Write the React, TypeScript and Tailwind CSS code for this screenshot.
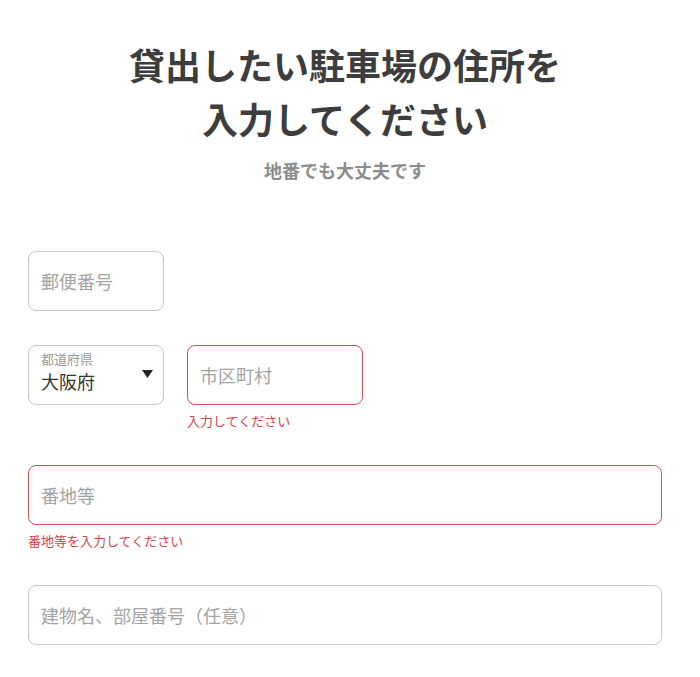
import React from 'react';

const font = 'font-["Noto_Sans_CJK_JP","Noto_Sans",sans-serif]';

const Field: React.FC<{ placeholder: string; error?: string; className?: string }> = ({
  placeholder,
  error,
  className = '',
}) => (
  <div className={className}>
    <div
      className={`h-[60px] rounded-lg border bg-white px-3 flex items-center ${
        error ? 'border-[#dc4d58]' : 'border-[#c8c8c8]'
      }`}
    >
      <span className="text-[18px] text-[#a3a3a3]">{placeholder}</span>
    </div>
    {error && <p className="mt-[6px] text-[13px] leading-[20px] text-[#d8404c]">{error}</p>}
  </div>
);

const App: React.FC = () => {
  return (
    <div className={`min-h-screen bg-white ${font}`}>
      <div className="ml-7 w-[634px] pt-[37px] pb-8">
        <h1 className="text-center text-[36px] leading-[54px] font-bold text-[#3d3d3d]">
          貸出したい駐車場の住所を
          <br />
          入力してください
        </h1>
        <p className="mt-3 text-center text-[18px] leading-[27px] font-bold text-[#8c8c8c]">
          地番でも大丈夫です
        </p>

        <Field placeholder="郵便番号" className="mt-[67px] w-[136px]" />

        <div className="mt-[34px] flex items-start gap-[23px]">
          <div className="relative h-[60px] w-[136px] rounded-lg border border-[#c8c8c8] px-3 pt-[4px]">
            <p className="text-[13px] leading-[18px] text-[#9a9a9a]">都道府県</p>
            <p className="text-[18px] leading-[26px] text-[#333]">大阪府</p>
            <svg
              className="absolute right-[10px] top-[24px]"
              width="11"
              height="8"
              viewBox="0 0 11 8"
            >
              <path d="M0 0 H11 L5.5 8 Z" fill="#222" />
            </svg>
          </div>
          <Field placeholder="市区町村" error="入力してください" className="w-[176px]" />
        </div>

        <Field placeholder="番地等" error="番地等を入力してください" className="mt-[34px]" />

        <Field placeholder="建物名、部屋番号（任意）" className="mt-[34px]" />
      </div>
    </div>
  );
};

export default App;
